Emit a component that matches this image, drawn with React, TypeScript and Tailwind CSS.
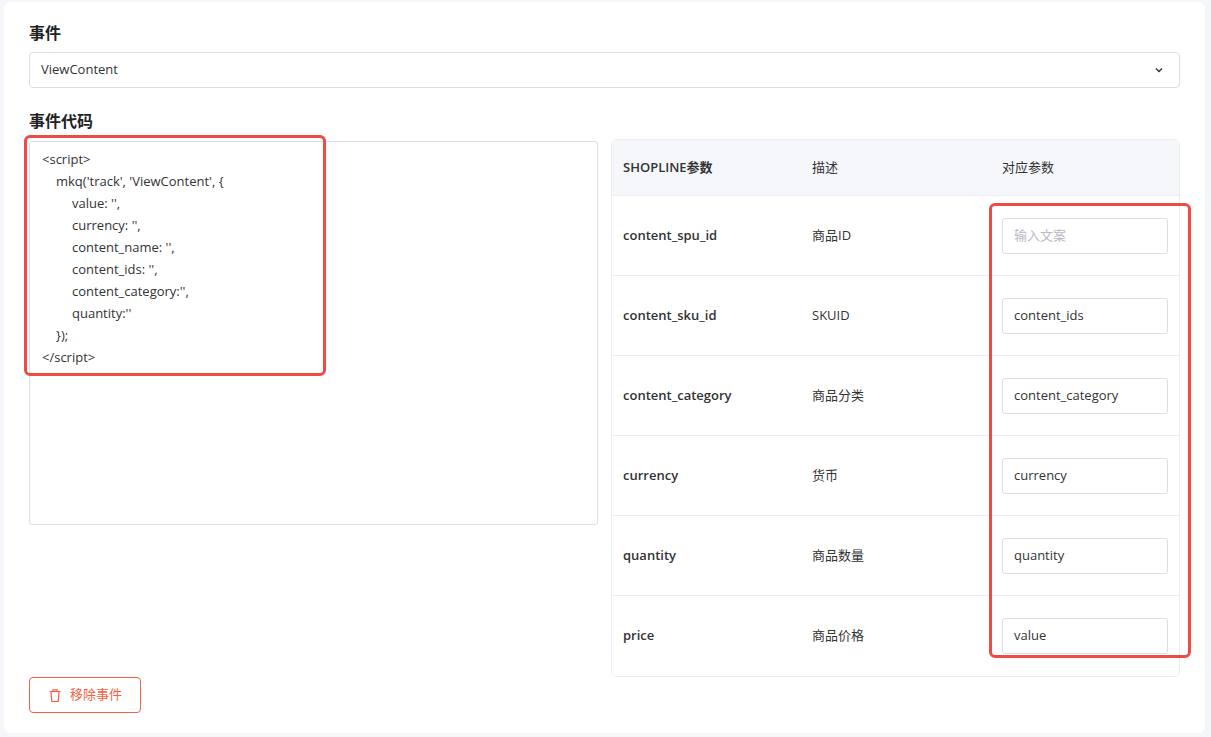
import React from "react";

const rows = [
  ["content_spu_id", "商品ID", ""],
  ["content_sku_id", "SKUID", "content_ids"],
  ["content_category", "商品分类", "content_category"],
  ["currency", "货币", "currency"],
  ["quantity", "商品数量", "quantity"],
  ["price", "商品价格", "value"],
];

const code: [number, string][] = [
  [0, "<script>"],
  [14, "mkq('track', 'ViewContent', {"],
  [30, "value: '',"],
  [30, "currency: '',"],
  [30, "content_name: '',"],
  [30, "content_ids: '',"],
  [30, "content_category:'',"],
  [30, "quantity:''"],
  [14, "});"],
  [0, "</script>"],
];

export default function App() {
  return (
    <div className="min-h-[737px] bg-[#f5f6fa] pl-[4px] pr-[6px] pt-[2px] pb-[4px]" style={{ fontFamily: '"Open Sans", "Noto Sans CJK SC", sans-serif' }}>
      <div className="bg-white rounded-[6px] h-[731px] px-[25px] pt-[20px] text-[#333] text-[13px]">
        <div className="text-[16px] font-bold text-[#222] leading-[22px]">事件</div>
        <div className="mt-[8px] h-[36px] border border-[#dcdde6] rounded-[4px] flex items-center justify-between px-[11px]">
          <span className="text-[#333]">ViewContent</span>
          <svg width="12" height="12" viewBox="0 0 12 12" className="mr-[3px]"><path d="M3 4.5l3 3 3-3" fill="none" stroke="#333" strokeWidth="1.4" /></svg>
        </div>
        <div className="mt-[22px] text-[16px] font-bold text-[#222] leading-[22px]">事件代码</div>
        <div className="flex gap-[13px] mt-[7px]">
          <div className="w-[570px] pt-[2px]">
            <div className="relative h-[384px] border border-[#dcdde6] rounded-[3px] pt-[6px] px-[12px]">
              {code.map(([ind, t], i) => (
                <div key={i} className="leading-[22px] text-[#333] whitespace-pre" style={{ paddingLeft: ind }}>{t}</div>
              ))}
              <div className="absolute left-[-6px] top-[-7px] w-[302px] h-[241px] border-[3px] border-[#f04a46] rounded-[6px]" />
            </div>
          </div>
          <div className="relative w-[570px] border border-[#edeef3] rounded-[6px] overflow-visible">
            <div className="h-[56px] bg-[#f5f7fb] rounded-t-[6px] flex items-center px-[11px] border-b border-[#edeef3]">
              <div className="w-[189px] font-semibold text-[#333]">SHOPLINE参数</div>
              <div className="w-[190px]">描述</div>
              <div>对应参数</div>
            </div>
            {rows.map(([a, b, c], i) => (
              <div key={i} className={`h-[80px] flex items-center px-[11px] ${i < 5 ? "border-b border-[#edeef3]" : ""}`}>
                <div className="w-[189px] font-semibold text-[#333]">{a}</div>
                <div className="w-[190px]">{b}</div>
                <div className="w-[166px] h-[36px] border border-[#dcdde6] rounded-[3px] flex items-center px-[11px]">
                  {c ? <span>{c}</span> : <span className="text-[#b8bac4]">输入文案</span>}
                </div>
              </div>
            ))}
            <div className="absolute left-[377px] top-[63px] w-[202px] h-[455px] border-[3px] border-[#f04a46] rounded-[6px]" />
          </div>
        </div>
        <div className="w-[112px] h-[36px] border border-[#f4603f] rounded-[4px] flex items-center justify-center gap-[8px] text-[#f4603f] text-[13px]" style={{ marginTop: 0 }}>
          <svg width="14" height="15" viewBox="0 0 14 15" fill="none" stroke="#f4603f" strokeWidth="1.2"><path d="M1.5 3.5h11M5 3.5V1.8h4v1.7M3 3.5l.8 10h6.4l.8-10" /></svg>
          <span>移除事件</span>
        </div>
      </div>
    </div>
  );
}
